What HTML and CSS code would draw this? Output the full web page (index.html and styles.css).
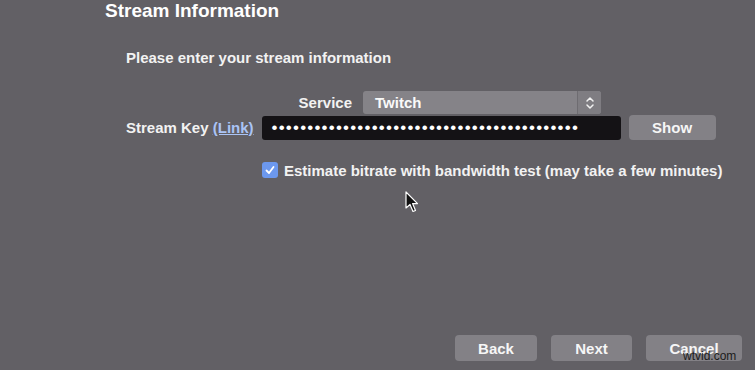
FILE: index.html
```html
<!DOCTYPE html>
<html lang="en">
<head>
    <meta charset="UTF-8">
    <title>Stream Information</title>
    <link rel="stylesheet" href="styles.css">
</head>
<body>
    <div class="wizard">
        <h1 class="title">Stream Information</h1>
        <p class="intro">Please enter your stream information</p>

        <!-- Service picker -->
        <div class="row service-row">
            <span class="label service-label">Service</span>
            <div class="select">
                <span class="select-value">Twitch</span>
                <span class="stepper">
                    <svg width="10" height="14" viewBox="0 0 10 14"><path d="M2 5 L5 2 L8 5 M2 9 L5 12 L8 9" fill="none" stroke="#f2f2f2" stroke-width="1.5" stroke-linecap="round" stroke-linejoin="round"/></svg>
                </span>
            </div>
        </div>

        <!-- Stream key -->
        <div class="row key-row">
            <span class="label">Stream Key <a class="link" href="#">(Link)</a></span>
            <div class="key-input">•••••••••••••••••••••••••••••••••••••••••••</div>
            <button class="btn show-btn">Show</button>
        </div>

        <label class="row check-row">
            <span class="checkbox">
                <svg width="12" height="12" viewBox="0 0 12 12"><path d="M2.5 6.5 L5 9 L9.5 3" fill="none" stroke="#fff" stroke-width="1.8" stroke-linecap="round" stroke-linejoin="round"/></svg>
            </span>
            Estimate bitrate with bandwidth test (may take a few minutes)
        </label>

        <div class="footer">
            <button class="btn back-btn">Back</button>
            <button class="btn next-btn">Next</button>
            <button class="btn cancel-btn">Cancel</button>
        </div>
    </div>

    <svg class="cursor" width="14" height="22" viewBox="0 0 14 22">
        <path d="M1 1 L1 17 L5 13.5 L8 20.5 L10.5 19.5 L7.6 12.6 L12.5 12.6 Z" fill="#111" stroke="#fff" stroke-width="1.2" stroke-linejoin="round"/>
    </svg>
    <span class="watermark">wtvid.com</span>
</body>
</html>
```

FILE: styles.css
```css
body {
    margin: 0;
    background-color: #626065;
    font-family: "Liberation Sans", Arial, sans-serif;
    color: #f2f2f2;
    height: 100vh;
    overflow: hidden;
}
.wizard {
    display: flex;
    flex-direction: column;
    height: 100%;
    box-sizing: border-box;
    padding-bottom: 9px;
}
.title {
    margin: 0;
    padding: 0 0 0 105px;
    font-size: 19px;
    line-height: 22px;
    font-weight: bold;
    color: #ffffff;
}
.intro {
    margin: 26px 0 0 126px;
    font-size: 15px;
    line-height: 20px;
    font-weight: bold;
}
.row {
    display: flex;
    align-items: center;
    font-size: 15px;
    font-weight: bold;
}
.service-row {
    margin: 23px 0 0 126px;
    gap: 11px;
}
.service-label {
    width: 226px;
    text-align: right;
}
.select {
    display: flex;
    width: 238px;
    height: 23px;
    border-radius: 3px;
    overflow: hidden;
    background-color: #858388;
}
.select-value {
    flex: 1;
    padding-left: 12px;
    line-height: 23px;
    color: #fafafa;
}
.stepper {
    width: 23px;
    display: flex;
    align-items: center;
    justify-content: center;
    border-left: 1px solid #6e6c71;
    background-color: #7f7d82;
}
.key-row {
    margin: 1px 0 0 126px;
    height: 25px;
    gap: 8px;
}
.link {
    color: #aac4f6;
    text-decoration: underline;
}
.key-input {
    width: 349px;
    height: 24px;
    padding-left: 10px;
    border-radius: 3px;
    background-color: #141215;
    color: #ffffff;
    font-size: 17px;
    font-weight: normal;
    line-height: 24px;
    letter-spacing: 1.2px;
    overflow: hidden;
    white-space: nowrap;
}
.btn {
    font-family: "Liberation Sans", Arial, sans-serif;
    font-size: 15px;
    font-weight: bold;
    color: #f6f6f6;
    background-color: #838186;
    border: none;
    border-radius: 4px;
    height: 26px;
    padding: 0;
}
.show-btn {
    width: 87px;
    height: 25px;
}
.check-row {
    margin: 20px 0 0 262px;
    height: 20px;
    gap: 6px;
}
.checkbox {
    width: 16px;
    height: 16px;
    border-radius: 3px;
    background-color: #6c98ee;
    display: flex;
    align-items: center;
    justify-content: center;
}
.footer {
    margin-top: auto;
    display: flex;
    justify-content: flex-end;
    gap: 14px;
    padding-right: 13px;
}
.back-btn {
    width: 82px;
}
.next-btn {
    width: 81px;
}
.cancel-btn {
    width: 96px;
}
.cursor {
    position: absolute;
    left: 405px;
    top: 191px;
}
.watermark {
    position: absolute;
    left: 683px;
    top: 349px;
    font-size: 12px;
    color: #1c1c1c;
}
```
